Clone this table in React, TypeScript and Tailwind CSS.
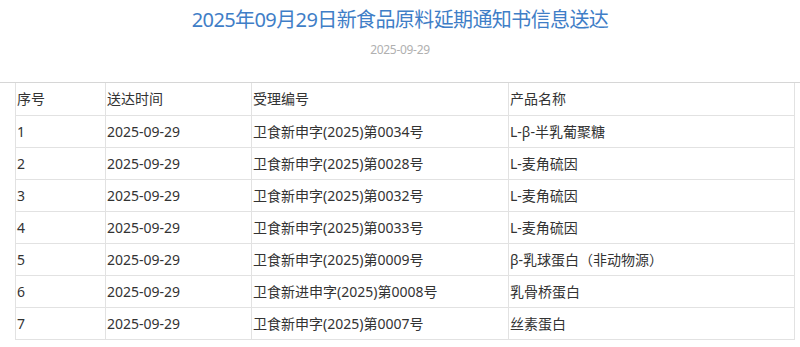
const rows = [
  ["1", "2025-09-29", "卫食新申字(2025)第0034号", "L-β-半乳葡聚糖"],
  ["2", "2025-09-29", "卫食新申字(2025)第0028号", "L-麦角硫因"],
  ["3", "2025-09-29", "卫食新申字(2025)第0032号", "L-麦角硫因"],
  ["4", "2025-09-29", "卫食新申字(2025)第0033号", "L-麦角硫因"],
  ["5", "2025-09-29", "卫食新申字(2025)第0009号", "β-乳球蛋白（非动物源）"],
  ["6", "2025-09-29", "卫食新进申字(2025)第0008号", "乳骨桥蛋白"],
  ["7", "2025-09-29", "卫食新申字(2025)第0007号", "丝素蛋白"],
];

const font = "font-['Noto_Sans','Noto_Sans_CJK_SC',sans-serif]";

export default function App() {
  return (
    <div className={`w-[800px] h-[347px] bg-white overflow-hidden ${font}`}>
      <div className="pt-[6px] pb-[24px] text-center border-b border-[#d6d6d6]">
        <h1 className="text-[20px] leading-[28px] tracking-[-0.6px] text-[#3f7ec7] font-normal">
          2025年09月29日新食品原料延期通知书信息送达
        </h1>
        <div className="mt-[8px] text-[12px] leading-[16px] tracking-[-0.3px] text-[#b0b0b0]">2025-09-29</div>
      </div>
      <table className="ml-[15px] w-[780px] border-collapse text-[14px] text-[#333] table-fixed">
        <colgroup>
          <col className="w-[90px]" />
          <col className="w-[146px]" />
          <col className="w-[257px]" />
          <col />
        </colgroup>
        <tbody>
          <tr>
            {["序号", "送达时间", "受理编号", "产品名称"].map((h) => (
              <td key={h} className="h-[32px] pl-[1px] border border-t-0 border-[#e2e2e2] align-middle">
                {h}
              </td>
            ))}
          </tr>
          {rows.map((r) => (
            <tr key={r[0]}>
              {r.map((c, i) => (
                <td key={i} className="h-[32px] pl-[1px] border border-[#e2e2e2] align-middle whitespace-nowrap">
                  {c}
                </td>
              ))}
            </tr>
          ))}
        </tbody>
      </table>
    </div>
  );
}
